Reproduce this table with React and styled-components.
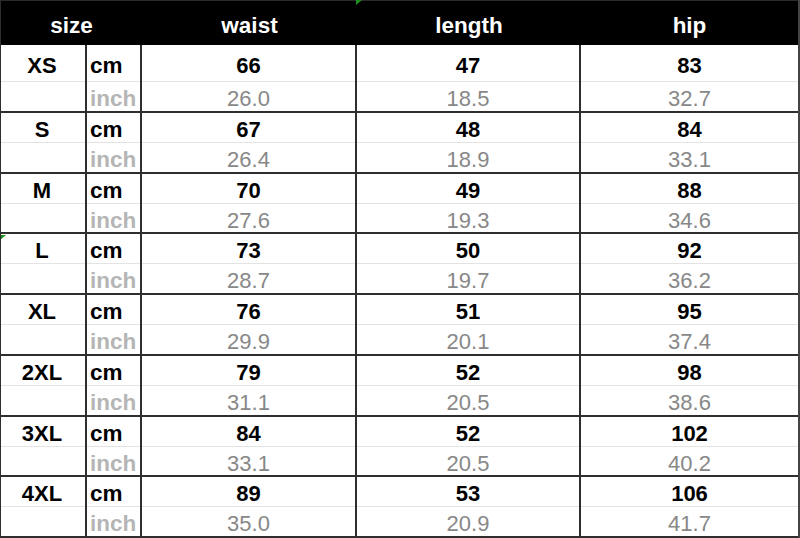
import React from "react";
import styled, { createGlobalStyle } from "styled-components";

const GlobalStyle = createGlobalStyle`
  html, body { margin: 0; padding: 0; background: #ffffff; }
  body { font-family: "Liberation Sans", Arial, sans-serif; }
  * { box-sizing: border-box; }
`;

const LINE = "#2e2e2e";
const COLS = "86px 55px 215px 224px 1fr";

const Sheet = styled.div`
  position: relative;
  width: 800px;
  height: 538px;
  display: flex;
  flex-direction: column;
  background: #ffffff;
  border-left: 1px solid ${LINE};
  border-right: 2px solid #444;
  overflow: hidden;
`;

const HeaderRow = styled.div`
  flex: 0 0 45px;
  display: grid;
  grid-template-columns: 141px 215px 224px 1fr;
  background: #000;
  border-top: 1px solid #2a2a2a;
`;

const HeadCell = styled.div`
  display: flex;
  align-items: center;
  justify-content: center;
  color: #ffffff;
  font-weight: bold;
  font-size: 22.5px;
  padding-top: 5px;
`;

const Group = styled.div`
  flex: ${(p) => (p.$first ? "0 0 68px" : "1 1 0")};
  display: flex;
  flex-direction: column;
  border-bottom: 2px solid ${LINE};
  min-height: 0;
`;

const SubRow = styled.div`
  display: grid;
  grid-template-columns: ${COLS};
  flex: ${(p) => (p.$inch ? "1 1 0" : `0 0 ${p.$tall ? 37 : 30}px`)};
  box-shadow: ${(p) => (p.$inch ? "none" : "inset 0 -1px #e3e3e3")};
  min-height: 0;
`;

const Cell = styled.div`
  display: flex;
  align-items: center;
  justify-content: center;
  font-size: 22px;
  border-right: ${(p) => (p.$last ? "none" : `2px solid ${LINE}`)};
  padding-top: 4px;
`;

const SizeCell = styled(Cell)`
  font-weight: bold;
  color: #000;
  padding-right: 2px;
`;

const UnitCell = styled(Cell)`
  justify-content: flex-start;
  padding-left: 3px;
  font-weight: bold;
  font-size: 22.5px;
  color: ${(p) => (p.$inch ? "#b5b5b5" : "#000")};
`;

const ValueCell = styled(Cell)`
  font-weight: ${(p) => (p.$inch ? "normal" : "bold")};
  color: ${(p) => (p.$inch ? "#888888" : "#000")};
`;

const Marker = styled.svg`
  position: absolute;
  left: ${(p) => p.$x}px;
  top: ${(p) => p.$y}px;
  width: 6px;
  height: 5px;
`;

const rows = [
  ["XS", [66, 47, 83], ["26.0", "18.5", "32.7"]],
  ["S", [67, 48, 84], ["26.4", "18.9", "33.1"]],
  ["M", [70, 49, 88], ["27.6", "19.3", "34.6"]],
  ["L", [73, 50, 92], ["28.7", "19.7", "36.2"]],
  ["XL", [76, 51, 95], ["29.9", "20.1", "37.4"]],
  ["2XL", [79, 52, 98], ["31.1", "20.5", "38.6"]],
  ["3XL", [84, 52, 102], ["33.1", "20.5", "40.2"]],
  ["4XL", [89, 53, 106], ["35.0", "20.9", "41.7"]],
];

function Corner({ x, y }) {
  return (
    <Marker $x={x} $y={y} viewBox="0 0 6 5">
      <polygon points="0,0 6,0 0,5" fill="#1f8f1f" />
    </Marker>
  );
}

export default function App() {
  return (
    <>
      <GlobalStyle />
      <Sheet>
        <HeaderRow>
          <HeadCell>size</HeadCell>
          <HeadCell>waist</HeadCell>
          <HeadCell>length</HeadCell>
          <HeadCell>hip</HeadCell>
        </HeaderRow>
        {rows.map(([size, cm, inch], i) => (
          <Group key={size} $first={i === 0}>
            <SubRow $tall={i === 0}>
              <SizeCell>{size}</SizeCell>
              <UnitCell>cm</UnitCell>
              {cm.map((v, j) => (
                <ValueCell key={j} $last={j === 2}>
                  {v}
                </ValueCell>
              ))}
            </SubRow>
            <SubRow $inch>
              <SizeCell />
              <UnitCell $inch>inch</UnitCell>
              {inch.map((v, j) => (
                <ValueCell key={j} $inch $last={j === 2}>
                  {v}
                </ValueCell>
              ))}
            </SubRow>
          </Group>
        ))}
        <Corner x={355} y={0} />
        <Corner x={-1} y={235} />
      </Sheet>
    </>
  );
}
